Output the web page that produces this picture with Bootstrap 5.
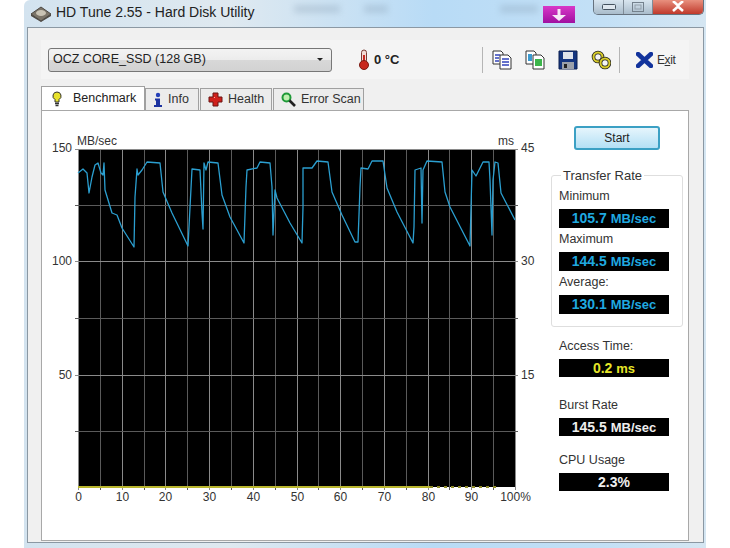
<!DOCTYPE html>
<html lang="en">
<head>
  <meta charset="UTF-8" />
  <meta name="viewport" content="width=device-width, initial-scale=1.0"/>
  <title>HD Tune 2.55 - Hard Disk Utility</title>
  <link href="https://cdn.jsdelivr.net/npm/bootstrap@5.3.0/dist/css/bootstrap.min.css" rel="stylesheet"/>
  <style>
    html, body { height: 548px; overflow: hidden; }
    body { background: #fff; font-family: "Liberation Sans", Arial, sans-serif; font-size: 12px; color: #333; }
    .app-win { position: relative; margin-left: 24px; width: 682px; height: 548px; padding: 0 2px 5px 3px; overflow: hidden;
      background: linear-gradient(90deg, #d3e3ef 0%, #dfe9f0 30%, #b8dbf6 60%, #c3e0f6 85%, #d5e6f2 100%); border-top-left-radius: 6px; }
    .title-row { height: 27px; padding-left: 3px; }
    .title-text { font-size: 14px; color: #222; margin-left: 4px; padding-bottom: 3px; }
    .ghost { position: absolute; top: 5px; height: 8px; background: #7d93a8; opacity: .28; filter: blur(3px); }
    .ghost-a { left: 270px; width: 46px; }
    .ghost-b { left: 340px; width: 24px; }
    .ghost-c { left: 476px; width: 38px; }
    .dl-badge { position: absolute; left: 519px; top: 6px; width: 32px; height: 17px; background: linear-gradient(180deg, #d838c8, #a010a0); }
    .caption-btns { position: absolute; left: 569px; top: 0; width: 111px; height: 15px; border: 1px solid #66727e; border-top: 0; border-radius: 0 0 5px 5px; overflow: hidden; }
    .cap { height: 100%; border-right: 1px solid #7f8c98; background: linear-gradient(180deg, #d8e5ef, #a9bccb); }
    .cap-min { width: 30px; }
    .cap-max { width: 29px; }
    .cap-close { flex: 1; border: 0; background: linear-gradient(180deg, #e8907e, #c0392b); }
    .client { height: 516px; background: #f0f0f0; border: 1px solid #8b98a3; padding: 12px 0 0 13px; }
    .tool-band { width: 648px; height: 39px; background: #f4f4f4; padding-left: 7px; }
    .disk-btn { width: 284px; height: 24px; padding: 0 8px 0 4px; font-size: 12.5px; color: #222; border: 1px solid #777; border-radius: 3px;
      background: linear-gradient(180deg, #f3f3f3 0%, #ececec 48%, #d8d8d8 52%, #d2d2d2 100%); }
    .disk-btn:hover, .disk-btn:active { border-color: #777; color: #222; }
    .disk-btn::after { border-top-color: #222; }
    .temp-wrap { margin-left: 26px; width: 124px; }
    .temp-val { font-size: 13px; font-weight: 700; color: #222; margin-left: 4px; }
    .tool-sep { width: 1px; height: 26px; background: #b5b5b5; }
    .tool-ico { margin-left: 9px; margin-right: 4px; }
    .exit-lbl { font-size: 12px; color: #333; margin-left: 4px; letter-spacing: -.4px; }
    .tab-row { margin-top: 7px; width: 648px; border: 0; height: 24px; align-items: flex-end; }
    .tab-row .nav-link { height: 22px; padding: 0 0 0 7px; font-size: 12.5px; color: #333; border: 1px solid #a0a0a0; border-bottom: 0; border-radius: 0; margin: 0 1px 0 0; background: #ececec; gap: 5px; }
    .tab-row .nav-link.active { height: 24px; padding-left: 10px; gap: 11px; background: #fff; color: #222; border-color: #a0a0a0; margin: 0; }
    .tab-a { width: 104px; }
    .tab-b { width: 54px; }
    .tab-c { width: 72px; }
    .tab-d { width: 91px; }
    .tab-body { width: 648px; height: 431px; background: #fff; border: 1px solid #a8a8a8; }
    .chart-svg { display: block; flex: none; }
    .chart-svg text { font-family: "Liberation Sans", Arial, sans-serif; font-size: 12px; fill: #333; }
    .side-col { width: 132px; margin-left: 9px; flex: none; }
    .start-btn { display: block; width: 86px; height: 24px; margin: 15px 0 0 23px; padding: 0; font-size: 12px; color: #222; border: 2px solid #3ba0c4; border-radius: 3px; background: linear-gradient(180deg, #e6f5fc, #b4e0f5); }
    .rate-group { margin-top: 25px; height: 152px; border: 1px solid #dedede; border-radius: 3px; padding: 0 0 0 7px; }
    .rate-title { display: block; width: max-content; height: 15px; margin: -8px 0 2px 2px; padding: 0 2px; background: #fff; font-size: 13px; line-height: 15px; color: #333; }
    .stat-lbl { height: 24px; line-height: 22px; font-size: 12.5px; color: #333; }
    .stat-box { width: 110px; height: 19px; background: #000; text-align: center; font-size: 14px; font-weight: 700; line-height: 19px; }
    .stat-box small { font-size: 13px; }
    .c-blue { color: #1fa9e0; }
    .c-yellow { color: #e6e628; }
    .c-white { color: #eee; }
    .short-box { height: 18px; line-height: 18px; }
    .plain-stat { margin-left: 8px; }
    .gap-a { margin-top: 8px; }
    .gap-b { margin-top: 17px; }
    .gap-c { margin-top: 13px; }
  </style>
</head>
<body>

<div class="app-win">
  <!-- glass title bar -->
  <div class="title-row d-flex align-items-center">
    <svg width="22" height="18" viewBox="0 0 22 18">
      <path d="M1 9 11 2l10 7-10 7z" fill="#7b7468" stroke="#4e4a44"/>
      <ellipse cx="11" cy="8" rx="5" ry="3" fill="#c9c3b4"/>
      <path d="M11 16l10-7v2l-10 6-10-6V9z" fill="#4e4a44"/>
    </svg>
    <span class="title-text">HD Tune 2.55 - Hard Disk Utility</span>
  </div>
  <span class="ghost ghost-a"></span>
  <span class="ghost ghost-b"></span>
  <span class="ghost ghost-c"></span>
  <div class="dl-badge d-flex align-items-center justify-content-center">
    <svg width="16" height="12" viewBox="0 0 16 12"><path d="M6.500 0h3v6H15l-7 6-7-6h5.500z" fill="#f6e8f6"/></svg>
  </div>
  <div class="caption-btns d-flex">
    <div class="cap cap-min d-flex align-items-center justify-content-center">
      <svg width="14" height="6" viewBox="0 0 14 6"><rect x=".5" y=".5" width="13" height="5" rx="1" fill="#dfe7ee" stroke="#45525e"/></svg>
    </div>
    <div class="cap cap-max d-flex align-items-center justify-content-center">
      <svg width="12" height="10" viewBox="0 0 12 10"><rect x=".5" y=".5" width="11" height="9" fill="none" stroke="#74818d"/><rect x="3" y="3" width="6" height="4" fill="none" stroke="#93a0ab"/></svg>
    </div>
    <div class="cap cap-close d-flex align-items-center justify-content-center">
      <svg width="16" height="12" viewBox="0 0 16 12"><path d="M3 0 8 4.500 13 0M3 10 8 5.500 13 10" fill="none" stroke="#fff" stroke-width="2.600"/></svg>
    </div>
  </div>

  <div class="client">
    <!-- toolbar -->
    <div class="tool-band d-flex align-items-center">
      <button type="button" class="btn disk-btn dropdown-toggle d-flex align-items-center justify-content-between">OCZ CORE_SSD (128 GB)</button>
      <div class="temp-wrap d-flex align-items-center">
        <svg width="12" height="21" viewBox="0 0 12 21">
          <rect x="3.500" y="1" width="5" height="13" rx="2.500" fill="#f2d9d2" stroke="#7a3a32"/>
          <rect x="5" y="6" width="2" height="9" fill="#c8281e"/>
          <circle cx="6" cy="16" r="4.500" fill="#c8281e" stroke="#7a1a12"/>
        </svg>
        <span class="temp-val">0 °C</span>
      </div>
      <span class="tool-sep"></span>
      <svg class="tool-ico" width="20" height="20" viewBox="0 0 20 20">
        <path d="M1 1h8l2 2v11H1z" fill="#fff" stroke="#333"/><path d="M8 5h8l3 3v11H8z" fill="#fff" stroke="#333"/>
        <path d="M3 5h5M3 8h4M3 11h4M10 9h7M10 12h7M10 15h7" stroke="#3344bb" stroke-width="1.500"/>
      </svg>
      <svg class="tool-ico" width="20" height="20" viewBox="0 0 20 20">
        <path d="M1 1h8l2 2v11H1z" fill="#fff" stroke="#333"/><path d="M8 5h8l3 3v11H8z" fill="#fff" stroke="#333"/>
        <rect x="3" y="4" width="4" height="7" fill="#3a9ad0"/><rect x="10" y="9" width="7" height="7" fill="#3bb54a"/>
      </svg>
      <svg class="tool-ico" width="20" height="20" viewBox="0 0 20 20">
        <path d="M1 1h18v18H1z" fill="#14357f" stroke="#0d2050"/><rect x="5" y="2" width="10" height="7" fill="#dfe3ea"/>
        <rect x="4" y="12" width="12" height="7" fill="#9aa0aa"/><rect x="6" y="14" width="3" height="4" fill="#222"/>
      </svg>
      <svg class="tool-ico" width="20" height="20" viewBox="0 0 20 20">
        <circle cx="7" cy="7" r="4.500" fill="none" stroke="#222" stroke-width="3.600"/><circle cx="7" cy="7" r="4.500" fill="none" stroke="#d8cc2a" stroke-width="2"/>
        <circle cx="14" cy="13" r="4.500" fill="none" stroke="#222" stroke-width="3.600"/><circle cx="14" cy="13" r="4.500" fill="none" stroke="#d8cc2a" stroke-width="2"/>
      </svg>
      <span class="tool-sep ms-1"></span>
      <svg class="ms-3" width="17" height="16" viewBox="0 0 17 16"><path d="M2 2 15 14M15 2 2 14" stroke="#12339c" stroke-width="4.500" stroke-linecap="round"/></svg>
      <span class="exit-lbl">E<u>x</u>it</span>
    </div>

    <!-- tabs -->
    <ul class="nav nav-tabs tab-row flex-nowrap">
      <li class="nav-item"><a class="nav-link active tab-a d-flex align-items-center" href="#">
        <svg width="10" height="16" viewBox="0 0 10 16"><path d="M5 1a4 4 0 0 1 2 7.500V11H3V8.500A4 4 0 0 1 5 1z" fill="#e8e22c" stroke="#333"/><path d="M3 12.500h4M3.500 14.500h3" stroke="#333" stroke-width="1.400"/></svg>
        Benchmark</a></li>
      <li class="nav-item"><a class="nav-link tab-b d-flex align-items-center" href="#">
        <svg width="10" height="16" viewBox="0 0 10 16"><circle cx="5" cy="3" r="2.200" fill="#2540b8"/><path d="M2 6.500h5V13h2v2H1v-2h2V8.500H2z" fill="#1c32a0"/></svg>
        Info</a></li>
      <li class="nav-item"><a class="nav-link tab-c d-flex align-items-center" href="#">
        <svg width="15" height="15" viewBox="0 0 15 15"><path d="M5 1h5v4h4v5h-4v4H5v-4H1V5h4z" fill="#d0201c" stroke="#6b1412"/><path d="M6 5h1v1H6z" fill="#f5b0a8"/></svg>
        Health</a></li>
      <li class="nav-item"><a class="nav-link tab-d d-flex align-items-center" href="#">
        <svg width="15" height="15" viewBox="0 0 15 15"><circle cx="5.500" cy="5.500" r="4" fill="#bff0b0" stroke="#1f9a38" stroke-width="2"/><path d="M8.500 8.500 14 14" stroke="#222" stroke-width="2.600"/></svg>
        Error Scan</a></li>
    </ul>

    <div class="tab-body d-flex">
      <!-- chart coordinates in the viewBox are page pixels -->
      <svg id="chart" class="chart-svg" width="500" height="429" viewBox="42 111 500 429"></svg>

      <div class="side-col">
        <button type="button" class="btn start-btn">Start</button>

        <div class="rate-group">
          <span class="rate-title">Transfer Rate</span>
          <div class="stat-lbl">Minimum</div>
          <div class="stat-box c-blue">105.7 <small>MB/sec</small></div>
          <div class="stat-lbl">Maximum</div>
          <div class="stat-box c-blue">144.5 <small>MB/sec</small></div>
          <div class="stat-lbl">Average:</div>
          <div class="stat-box c-blue">130.1 <small>MB/sec</small></div>
        </div>

        <div class="plain-stat gap-a">
          <div class="stat-lbl">Access Time:</div>
          <div class="stat-box short-box c-yellow">0.2 <small>ms</small></div>
        </div>
        <div class="plain-stat gap-b">
          <div class="stat-lbl">Burst Rate</div>
          <div class="stat-box short-box c-white">145.5 <small>MB/sec</small></div>
        </div>
        <div class="plain-stat gap-c">
          <div class="stat-lbl">CPU Usage</div>
          <div class="stat-box short-box c-white">2.3%</div>
        </div>
      </div>
    </div>
  </div>
</div>

<script src="https://cdn.jsdelivr.net/npm/bootstrap@5.3.0/dist/js/bootstrap.bundle.min.js"></script>
<script>
  const LEFT = 78, RIGHT = 515, TOP = 149, BOTTOM = 487;

  // curve read off the reference, page pixels
  const curve = [
    [78,173],[83,169],[87,173],[89,193],[92,177],[95,165],[98,163],[101,173],[103,175],[104,163],[105,190],
    [112,213],[117,215],[122,228],[134,247],[135,197],[137,169],[138,175],[142,170],[147,162],[160,163],
    [163,192],[172,213],[188,246],[189,227],[192,169],[200,170],[202,213],[203,229],[204,163],[206,170],
    [208,162],[218,163],[222,195],[230,217],[244,243],[246,187],[247,170],[257,168],[260,162],[270,163],
    [272,187],[273,235],[275,190],[277,198],
    [290,223],[302,243],[303,207],[303,168],[312,168],[317,161],[328,162],[332,192],[342,215],[355,242],
    [358,242],[360,187],[361,168],[368,169],[372,161],[383,161],[387,188],[397,212],[413,243],[414,227],
    [415,170],[421,168],[422,223],[423,170],[427,161],[442,162],[445,192],[450,207],[470,246],[472,170],
    [476,176],[483,162],[489,162],[490,180],[492,235],[493,180],[495,162],[498,163],[501,193],[515,220]
  ];

  let svg = "";
  function line(x1, y1, x2, y2, color, w) {
    svg += `<line x1="${x1}" y1="${y1}" x2="${x2}" y2="${y2}" stroke="${color}" stroke-width="${w || 1}"/>`;
  }
  function label(x, y, text, anchor) {
    svg += `<text x="${x}" y="${y}" text-anchor="${anchor || "start"}">${text}</text>`;
  }

  svg += `<rect x="${LEFT}" y="${TOP}" width="${RIGHT - LEFT}" height="${BOTTOM - TOP}" fill="#000"/>`;

  for (let i = 0; i <= 20; i++) {
    const x = Math.round(LEFT + i * (RIGHT - LEFT) / 20) + 0.5;
    line(x, TOP, x, BOTTOM + 3, i % 2 ? "#5a5a5a" : "#8a8a8a");
    if (i % 2 === 0) {
      label(x, 501, i === 20 ? "100%" : String(i * 5), i === 20 ? "middle" : "middle");
    }
  }
  [149, 205, 261, 318, 375, 431].forEach((y, i) => {
    line(LEFT - 3, y + 0.5, RIGHT + 3, y + 0.5, i % 2 ? "#5a5a5a" : "#8a8a8a");
  });

  line(LEFT, 487, 430, 487, "#b9b62e", 2);
  for (let x = 430; x < 500; x += 7) line(x, 487, x + 3, 487, "#8f8c2a", 2);

  svg += `<polyline fill="none" stroke="#2b9fd0" stroke-width="1.300" stroke-linejoin="round" points="${curve.map(p => p.join(",")).join(" ")}"/>`;

  label(72, 152, "150", "end");
  label(72, 265, "100", "end");
  label(72, 379, "50", "end");
  label(77, 145, "MB/sec");
  label(514, 145, "ms", "end");
  label(521, 152, "45");
  label(521, 265, "30");
  label(521, 379, "15");

  document.getElementById("chart").innerHTML = svg;
</script>
</body>
</html>
